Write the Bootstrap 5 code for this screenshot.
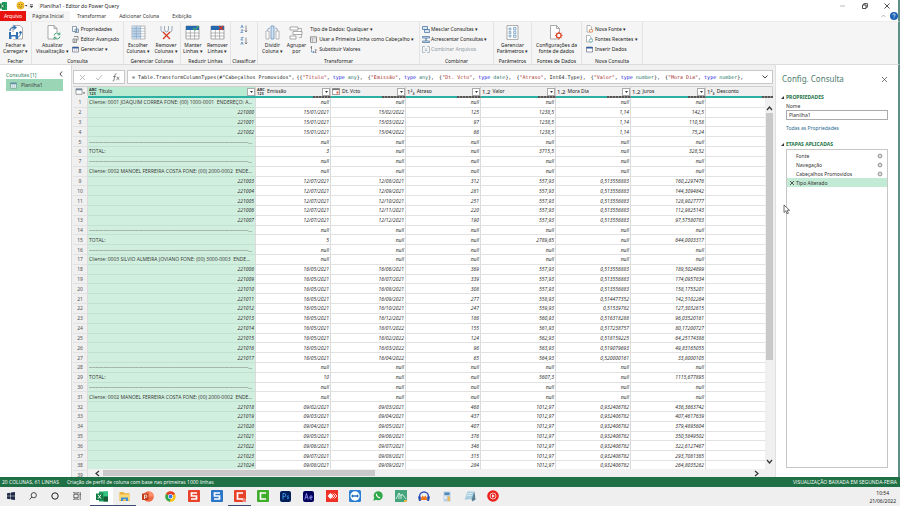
<!DOCTYPE html>
<html lang="pt-BR">
<head>
<meta charset="utf-8">
<meta name="viewport" content="width=device-width, initial-scale=1">
<title>Planilha1 - Editor do Power Query</title>
<link href="https://cdn.jsdelivr.net/npm/bootstrap@5.3.0/dist/css/bootstrap.min.css" rel="stylesheet">
<style>
body{font-family:"Noto Sans","Open Sans",sans-serif;font-size:5px;line-height:8px;color:#333;background:#fff}
button,input,a.plain{font:inherit;color:inherit;text-decoration:none}
a.plain{color:#2f6a8f}
button{background:none;border:0;padding:0}
svg{display:block;flex:none}
.fill{min-height:0}
.edge{border-right:2px solid #5f8f86}
.titlebar{height:11px;color:#222}
.tabs{height:10px}
.tabs button{height:10px;white-space:nowrap}
.tab-file{background:#e8130f;color:#fff;width:26px}
.tab-on{background:#f5f5f5;width:44px}
.tab-off{margin-left:7px;margin-right:6px}
.ribbon{height:44px;background:#f5f5f5;border-bottom:1px solid #dcdcdc;border-top:1px solid #ececec;line-height:6px;color:#222}
.grp{border-right:1px solid #e3e3e3;padding-top:3px;flex:none;white-space:nowrap}
.grp-body{height:32px}
.grp-name{text-align:center;line-height:8px}
.big{display:flex;flex-direction:column;align-items:center;text-align:center;gap:2px;line-height:6px}
.rows3{display:flex;flex-direction:column;gap:2px}
.rows3 button{display:flex;align-items:center;gap:2px;height:8px}
.near{padding-left:2px}.near button{gap:1px}
.w32{width:32px}.w92{width:92px}.w57{width:57px}.w50{width:50px}.w27{width:27px}.w162{width:162px}.w74{width:74px}.w38{width:38px}.w61{width:61px}
.queries{width:72px;border-right:1px solid #d9d9d9;padding:6px 8px 0 6px;color:#2f7d57}
.query-on{background:#9ad5b5;height:12px;color:#444;width:100%}
.center-pane{min-width:0;background:#f0f0f0;padding:5px 2px 0 1px}
.fbar{height:14px;gap:2px;margin-bottom:2px}
.fbox{background:#fff;border:1px solid #c8c8c8}
.ftools{width:52px}
.formula{font-family:"DejaVu Sans Mono","Liberation Mono",monospace;color:#222;white-space:pre;overflow:hidden;min-width:0;padding-left:4px}
.formula span{margin-right:2px}
.formula b{font-weight:400;color:#a8322e}.formula i{font-style:normal;color:#2222d8}.formula u{text-decoration:none;color:#28786c}
.gridview{overflow:hidden;min-height:0;background:#fff}
.sheet{table-layout:fixed;width:100%;border-collapse:separate;border-spacing:0}
.c-num{width:15px}.c-tit{width:168px}.c-val{width:75px}
.heads th{height:10px;padding:0;background:#f0f0f0;font-weight:400;border-right:1px solid #d0d0d0;border-top:1px solid #d0d0d0;line-height:9px;color:#222}
.heads th.sel{background:#b9ead2}
.hcell{display:flex;align-items:center;height:9px;gap:2px;padding:0 0 0 1px}
.abc{font-size:4px;line-height:4px;width:8px;text-align:left;font-weight:600}
.n12{font-size:6px;line-height:8px}
.drop{margin-left:auto;width:8px;height:8px;border:1px solid #ababab !important;background:#fff !important;display:flex;align-items:center;justify-content:center}
.quality td{height:2px;padding:0;line-height:0;background:#2bb0a3}
.quality td:first-child{background:#f0f0f0}
.quality span{display:block;height:2px;margin-left:auto;background:repeating-linear-gradient(90deg,#555 0 2px,#8a8a8a 2px 3px)}
.q18{width:18px}.q24{width:24px}.q11{width:11px}
.bodywrap{position:relative;overflow:hidden;min-height:0}
.datarows{height:calc(100% + 4px)}
.datarows td,.datarows th{padding:0 1px 0 0;line-height:8px;border-bottom:1px solid #e2e2e2;border-right:1px solid #dcdcdc;text-align:right;font-style:italic;white-space:nowrap;overflow:hidden;text-overflow:ellipsis;color:#333;font-weight:400}
.datarows th{background:#f0f0f0;font-style:normal;text-align:center;color:#555;padding:0}
.datarows td.tit{background:#d1efdf;border-bottom-color:#c3e1d1}
.datarows td.txt{font-family:"Open Sans","Noto Sans",sans-serif;text-align:left;font-style:normal;padding:0 2px 0 1px;white-space:pre}
.vscroll{position:absolute;right:0;top:0;bottom:8px;width:8px;background:#f0f0f0;padding:8px 0 5px}
.vthumb{flex:0 0 69%;background:#c9c9c9;width:7px;margin-top:2px}
.hscroll{position:absolute;left:15px;right:0;bottom:0;height:8px;background:#f0f0f0;padding-left:7px;padding-right:14px}
.hthumb{width:41%;height:6px;background:#c9c9c9;margin-left:3px}
.settings{width:123px;padding:8px 10px 9px 4px;border-left:1px solid #e0e0e0}
.settings h1{font-size:8px;line-height:12px;color:#4e7d6d;margin:0;padding-left:2px;font-weight:400}
.settings h2{font-size:5px;line-height:8px;color:#217346;margin:0;font-weight:700}
.sect{padding-left:6px}
.gap-label{margin-top:1px}
.namebox{border:1px solid #ababab;height:10px;width:100%;padding:0 2px;border-radius:0;background:#fff}
.steps{border:1px solid #c6c6c6;padding-top:1px}
.step{display:flex;align-items:center;height:9px;width:100%;padding:0 4px 0 2px}
.step span{flex:1;text-align:left}
.step-on{background:#c2ead5 !important}
.status{font-family:"Open Sans","Noto Sans",sans-serif;height:10px;background:#1f7145;color:#fff;padding:0 3px 0 2px;line-height:10px}
.taskbar{height:19px;background:#efefef;color:#222}
.tb{width:23px;height:19px;display:flex;align-items:center;justify-content:center;border-bottom:1px solid transparent !important}
.tb-s{width:22px}
.tb-s + .tb:not(.tb-s){margin-left:2px}
.run{border-bottom-color:#3a4a70 !important}
.front{background:#fff !important}
.pointer{position:absolute;left:7px;top:139px}
</style>
<script src="https://cdn.jsdelivr.net/npm/bootstrap@5.3.0/dist/js/bootstrap.bundle.min.js"></script>
</head>
<body>
<div class="vh-100 d-flex flex-column overflow-hidden">
<div class="d-flex flex-column flex-grow-1 overflow-hidden fill">
<header class="titlebar edge d-flex align-items-center">
  <svg width="8" height="8" viewBox="0 0 8 8"><path d="M2 0h5v8H2z" fill="#21a366"/><path d="M0 1.500h5v5H0z" fill="#107c41"/><path d="M1.300 2.500l2.400 3M3.700 2.500l-2.400 3" stroke="#fff" stroke-width=".8"/></svg>
  <svg class="ms-2" width="9" height="9" viewBox="0 0 9 9"><circle cx="4.500" cy="4.500" r="3.700" fill="#f7c62f" stroke="#d59a1b" stroke-width=".5"/><circle cx="3.200" cy="3.500" r=".6" fill="#5b4310"/><circle cx="5.800" cy="3.500" r=".6" fill="#5b4310"/><path d="M2.500 5.300q2 2 4 0" stroke="#5b4310" stroke-width=".6" fill="none"/></svg>
  <svg width="15" height="6" viewBox="0 0 15 6"><path d="M0 2h2.500L1.200 3.700z" fill="#444"/><path d="M4 0v6M14 0v6" stroke="#ccc" stroke-width=".6"/><path d="M5 1.500h3M5 3h3l-1.500 1.800z" stroke="#444" stroke-width=".6" fill="#444"/></svg>
  <span>Planilha1 - Editor do Power Query</span>
  <div class="ms-auto d-flex align-items-center gap-3 me-2">
    <button aria-label="Minimizar"><svg width="6" height="6"><path d="M0 3h5" stroke="#bbb"/></svg></button>
    <button aria-label="Restaurar"><svg width="6" height="6" viewBox="0 0 6 6"><path d="M.5 2h3.500v3.500H.5zM1.800 2V.6h3.600v3.600H4" fill="none" stroke="#222" stroke-width=".8"/></svg></button>
    <button aria-label="Fechar janela"><svg width="6" height="6" viewBox="0 0 6 6"><path d="M.5.500l5 5M5.500.500l-5 5" stroke="#222" stroke-width=".8"/></svg></button>
  </div>
</header>
<nav class="tabs edge d-flex align-items-center">
  <button class="tab-file">Arquivo</button><button class="tab-on">Página Inicial</button><button class="tab-off">Transformar</button><button class="tab-off">Adicionar Coluna</button><button class="tab-off">Exibição</button>
  <div class="ms-auto d-flex align-items-center gap-1"><svg width="5" height="4"><path d="M.5 3L2.500 1l2 2" stroke="#999" stroke-width=".7" fill="none"/></svg><button aria-label="Ajuda"><svg width="8" height="8"><circle cx="4" cy="4" r="4" fill="#1e62b5"/><path d="M2.800 3.200q0-1.400 1.200-1.400t1.200 1.100q0 .7-1.200 1.500v.5M4 5.600v.7" stroke="#fff" stroke-width=".7" fill="none"/></svg></button></div>
</nav>
<section class="ribbon edge d-flex">
  <div class="grp w32"><div class="grp-body d-flex justify-content-center"><button class="big"><svg width="16" height="15" viewBox="0 0 16 15"><path d="M5 .5h7l2.500 2.500v11H5z" fill="#fff" stroke="#888" stroke-width=".7"/><path d="M1 7h9v7H1z" fill="#3572b0"/><path d="M3 7h5v3H3zM3.500 11.500h4V14h-4z" fill="#fff"/><path d="M2 6Q2 2 7 2.500M5.500.800L8 2.600 5.500 4.400" fill="none" stroke="#3572b0" stroke-width="1.200"/><path d="M9 12q4 0 3.500-5M11 8.500L12.500 6 14 8.500" fill="none" stroke="#3572b0"/></svg><span>Fechar e<br>Carregar ▾</span></button></div><div class="grp-name">Fechar</div></div>
  <div class="grp w92"><div class="grp-body d-flex justify-content-between px-1"><button class="big"><svg class="ms-1" width="14" height="15" viewBox="0 0 14 15"><path d="M1 .5h6l3 3V14H1zM7 .5v3h3" fill="#fff" stroke="#888" stroke-width=".7"/><circle cx="10" cy="11" r="3.500" fill="#fff"/><path d="M7 10.500a3 3 0 0 1 5.500-1M13 11.500a3 3 0 0 1-5.500 1M12.800 7.500v2.300h-2.200M7.200 14.500v-2.300h2.200" fill="none" stroke="#35956b" stroke-width=".9"/></svg><span>Atualizar<br>Visualização ▾</span></button>
    <div class="rows3"><button><svg width="7" height="7" viewBox="0 0 7 7"><path d="M.5.500h4v5h-4zM3 3h3.500v3.500H3z" fill="#fff" stroke="#5d7894" stroke-width=".7"/><path d="M4 4.200h1.700M4 5.300h1.700" stroke="#3572b0" stroke-width=".5"/></svg>Propriedades</button><button><svg width="7" height="7" viewBox="0 0 7 7"><path d="M2 .5h4v4M1 3h3.500v3.500H1z" fill="none" stroke="#666" stroke-width=".7"/><path d="M2 4.200h1.500M2 5.300h1.500" stroke="#444" stroke-width=".5"/></svg>Editor Avançado</button><button><svg width="7" height="7" viewBox="0 0 7 7"><path d="M.5 1h6v5h-6z" fill="#fff" stroke="#557" stroke-width=".6"/><path d="M.5 1h6v1.500h-6z" fill="#2f5fa0"/><path d="M.5 4h6M2.500 2v4M4.500 2v4" stroke="#99a" stroke-width=".3"/></svg>Gerenciar ▾</button></div></div><div class="grp-name">Consulta</div></div>
  <div class="grp w57"><div class="grp-body d-flex justify-content-around"><button class="big"><svg width="15" height="15" viewBox="0 0 15 15"><path d="M1 1h13v13H1z" fill="#fff" stroke="#888" stroke-width=".6"/><path d="M1 1h8.600v13H1z" fill="#bcd5ec"/><path d="M1 3.600h13M1 6.200h13M1 8.800h13M1 11.400h13M5.300 1v13M9.600 1v13" stroke="#7f98b0" stroke-width=".5"/></svg><span>Escolher<br>Colunas ▾</span></button><button class="big"><svg width="15" height="15" viewBox="0 0 15 15"><path d="M2 1v4q0 2 2 2M5.500 1v3q0 3 2 3t2-3V1M13 1v4q0 2-2 2" fill="none" stroke="#8ea3b8" stroke-width=".9"/><path d="M4 7l7 7M11 7l-7 7" stroke="#d23b22" stroke-width="1.300"/></svg><span>Remover<br>Colunas ▾</span></button></div><div class="grp-name">Gerenciar Colunas</div></div>
  <div class="grp w50"><div class="grp-body d-flex justify-content-around"><button class="big"><svg width="15" height="15" viewBox="0 0 15 15"><path d="M1 1h13v13H1z" fill="#fff" stroke="#888" stroke-width=".7"/><path d="M1 1h13v4H1z" fill="#2468b0"/><path d="M1 8h13M1 11h13M5.300 5v9M9.600 5v9" stroke="#888" stroke-width=".6"/><path d="M8 3l2 2 3.500-4" stroke="#4aa372" stroke-width="1.200" fill="none"/></svg><span>Manter<br>Linhas ▾</span></button><button class="big"><svg width="15" height="15" viewBox="0 0 15 15"><path d="M1 1h13v13H1z" fill="#fff" stroke="#888" stroke-width=".7"/><path d="M1 1h13v4H1z" fill="#2468b0"/><path d="M1 8h13M1 11h13M5.300 5v9M9.600 5v9" stroke="#888" stroke-width=".6"/><path d="M9 1l4 4M13 1L9 5" stroke="#d23b22" stroke-width="1.200"/></svg><span>Remover<br>Linhas ▾</span></button></div><div class="grp-name">Reduzir Linhas</div></div>
  <div class="grp w27"><div class="grp-body d-flex flex-column align-items-center gap-1"><button aria-label="Classificar crescente"><svg width="8" height="8" viewBox="0 0 8 8"><path d="M.8 3L2 .3 3.200 3M.8 5h2.400L.8 7.700h2.400" fill="none" stroke="#3572b0" stroke-width=".7"/><path d="M6 .5v6.500M4.800 5.500L6 7l1.200-1.500" fill="none" stroke="#666" stroke-width=".7"/></svg></button><button aria-label="Classificar decrescente"><svg width="8" height="8" viewBox="0 0 8 8"><path d="M.8.300h2.400L.8 3h2.400M.8 7.700L2 5l1.200 2.700" fill="none" stroke="#3572b0" stroke-width=".7"/><path d="M6 .5v6.500M4.800 5.500L6 7l1.200-1.500" fill="none" stroke="#666" stroke-width=".7"/></svg></button></div><div class="grp-name">Classificar</div></div>
  <div class="grp w162"><div class="grp-body d-flex ps-1 gap-1"><button class="big"><svg width="15" height="15" viewBox="0 0 15 15"><path d="M1 6h3v8H1zM11 6h3v8h-3z" fill="#fff" stroke="#999" stroke-width=".7"/><path d="M6 1h3v13H6z" fill="#cfe1f3" stroke="#5d89b5" stroke-width=".7"/><path d="M5 3Q2.500 3 2.500 5.500M10 3q2.500 0 2.500 2.500" fill="none" stroke="#5d89b5" stroke-width=".7"/></svg><span>Dividir<br>Coluna ▾</span></button><button class="big"><svg width="15" height="15" viewBox="0 0 15 15"><path d="M1 2h8v3H1zM4 6.500h9v3H4zM1 11h6v3H1z" fill="#fff" stroke="#888" stroke-width=".7"/><path d="M9 3.500h3.500v3M10 12.500h2.500v-3" fill="none" stroke="#888" stroke-width=".6"/></svg><span>Agrupar<br>por</span></button>
    <div class="rows3"><button>Tipo de Dados: Qualquer ▾</button><button><svg width="7" height="7" viewBox="0 0 7 7"><path d="M.5.800h6v5.500h-6z" fill="#fff" stroke="#666" stroke-width=".7"/><path d="M.5 2.200h6M.5 4h6M2.500 2v4" stroke="#888" stroke-width=".5"/></svg>Usar a Primeira Linha como Cabeçalho ▾</button><button><svg width="7" height="7" viewBox="0 0 7 7"><path d="M.5 1.200L1.500.500v3" fill="none" stroke="#444" stroke-width=".7"/><path d="M1.500 4v2H4M3.200 5L4 6 3.200 7" fill="none" stroke="#3572b0" stroke-width=".6"/><path d="M4.800 3.800h1.500L4.800 6.500h1.700" fill="none" stroke="#444" stroke-width=".6"/></svg>Substituir Valores</button></div></div><div class="grp-name">Transformar</div></div>
  <div class="grp w74"><div class="grp-body"><div class="rows3 near"><button><svg width="8" height="7" viewBox="0 0 8 7"><path d="M.5.500h5v3h-5zM2.500 3.500h5v3h-5z" fill="#d6e6f5" stroke="#426d98" stroke-width=".7"/></svg>Mesclar Consultas ▾</button><button><svg width="8" height="7" viewBox="0 0 8 7"><path d="M.5.500h7v1.500h-7zM.5 5h7v1.500h-7z" fill="#d6e6f5" stroke="#426d98" stroke-width=".7"/><path d="M4 2v3" stroke="#426d98"/></svg>Acrescentar Consultas ▾</button><button class="text-secondary opacity-75"><svg width="8" height="7" viewBox="0 0 8 7"><path d="M3 .5H.5v6H3M5 .5h2.500v6H5M4 2v3M2.800 4L4 5.200 5.200 4" fill="none" stroke="#7790a8" stroke-width=".7"/></svg>Combinar Arquivos</button></div></div><div class="grp-name">Combinar</div></div>
  <div class="grp w38"><div class="grp-body d-flex justify-content-center"><button class="big"><svg width="13" height="15" viewBox="0 0 13 15"><path d="M1 .6h11v13.800H1z" fill="#fff" stroke="#888" stroke-width=".7"/><path d="M3 3h2v2H3zM3 6.500h2v2H3zM3 10h2v2H3zM7.500 2.500H10V5H7.500zM7.500 6.300H10v2.500H7.500zM7.500 10H10v2.400H7.500z" fill="#dbe9f5" stroke="#6390b8" stroke-width=".6"/></svg><span>Gerenciar<br>Parâmetros ▾</span></button></div><div class="grp-name">Parâmetros</div></div>
  <div class="grp w50"><div class="grp-body d-flex justify-content-center"><button class="big"><svg width="14" height="15" viewBox="0 0 14 15"><path d="M1.500 .5h6l3 3V14h-9zM7.500.500v3h3" fill="#fff" stroke="#888" stroke-width=".7"/><circle cx="9.800" cy="10.500" r="2.300" fill="#fff" stroke="#dd4b2b" stroke-width="1.300"/><path d="M9.800 6.700v1.500M9.800 12.800v1.500M6 10.500h1.500M12.100 10.500h1.500M7.100 7.800l1 1M11.500 12.200l1 1M12.500 7.800l-1 1M8.100 12.200l-1 1" stroke="#dd4b2b"/></svg><span>Configurações da<br>fonte de dados</span></button></div><div class="grp-name">Fontes de Dados</div></div>
  <div class="grp w61"><div class="grp-body ps-1"><div class="rows3"><button><svg width="7" height="8" viewBox="0 0 7 8"><path d="M1 .5h3l1.500 1.500v5H1z" fill="#fff" stroke="#888" stroke-width=".6"/><path d="M3.500 4.500H6.500V7h-3z" fill="#fff" stroke="#d87c3b" stroke-width=".7"/></svg>Nova Fonte ▾</button><button><svg width="7" height="8" viewBox="0 0 7 8"><path d="M.5.500h3L5 2v5H.5z" fill="#fff" stroke="#888" stroke-width=".6"/><circle cx="5" cy="5.500" r="1.700" fill="#fff" stroke="#3b8f91" stroke-width=".7"/></svg>Fontes Recentes ▾</button><button><svg width="7" height="7" viewBox="0 0 7 7"><path d="M.5 1h6v5h-6z" fill="#fff" stroke="#557" stroke-width=".6"/><path d="M.5 1h6v1.500h-6z" fill="#2f5fa0"/></svg>Inserir Dados</button></div></div><div class="grp-name">Nova Consulta</div></div>
</section>
<main class="edge d-flex flex-grow-1 fill">
  <aside class="queries flex-shrink-0"><div class="d-flex justify-content-between align-items-start"><span>Consultas [1]</span><button aria-label="Recolher"><svg width="4" height="6"><path d="M3 .5L1 3l2 2.500" stroke="#333" stroke-width=".9" fill="none"/></svg></button></div>
    <button class="query-on d-flex align-items-center gap-1 ps-1"><svg width="7" height="7" viewBox="0 0 7 7"><path d="M.5.800h6v5.500h-6z" fill="#e9f5ee" stroke="#5a8f86" stroke-width=".6"/><path d="M.5.800h6v1.500h-6z" fill="#5a8fa6"/><path d="M.5 4.200h6M2.500 2v4M4.500 2v4" stroke="#8ab" stroke-width=".3"/></svg>Planilha1</button></aside>
  <section class="center-pane flex-grow-1 d-flex flex-column">
    <div class="fbar d-flex">
      <div class="fbox ftools d-flex align-items-center justify-content-around flex-shrink-0"><button aria-label="Cancelar"><svg width="7" height="7"><path d="M1 1l5 5M6 1L1 6" stroke="#aaa" stroke-width=".8"/></svg></button><button aria-label="Confirmar"><svg width="8" height="7"><path d="M1 4l2 2 4-5" stroke="#aaa" stroke-width=".8" fill="none"/></svg></button><button aria-label="Inserir etapa"><svg width="8" height="9" viewBox="0 0 8 9"><path d="M4.500.800Q3 .3 2.600 3L2 7Q1.800 8.500.6 8M1.200 3.500h2.600M4.600 4.200q.8-.6 1.200.8t1.600 1.800M7.400 4.200L4.300 7" stroke="#555" stroke-width=".7" fill="none"/></svg></button></div>
      <div class="fbox d-flex align-items-center flex-grow-1 overflow-hidden"><div class="formula flex-grow-1" role="textbox" aria-label="Fórmula"><span>= Table.TransformColumnTypes(#"Cabeçalhos Promovidos",</span><span>{{<b>"Título"</b>, <i>type</i> <u>any</u>}, </span><span>{<b>"Emissão"</b>, <i>type</i> <u>any</u>}, </span><span>{<b>"Dt. Vcto"</b>, <i>type</i> <u>date</u>}, </span><span>{<b>"Atraso"</b>, Int64.Type}, </span><span>{<b>"Valor"</b>, <i>type</i> <u>number</u>}, </span><span>{<b>"Mora Dia"</b>, <i>type</i> <u>number</u>},</span></div><button class="px-1" aria-label="Expandir"><svg width="6" height="4"><path d="M.5.500l2.500 2.500L5.500.500" stroke="#333" stroke-width=".9" fill="none"/></svg></button></div>
    </div>
    <div class="gridview flex-grow-1 d-flex flex-column">
      <table class="sheet flex-shrink-0"><colgroup><col class="c-num"><col class="c-tit"><col class="c-val" span="6"><col></colgroup>
        <thead class="heads"><tr id="heads"><th><div class="hcell"><svg width="11" height="7" viewBox="0 0 11 7"><path d="M2 .8h6v5.500H2z" fill="#fff" stroke="#666" stroke-width=".6"/><path d="M2 .8h6v1.500H2z" fill="#6d87a0"/><path d="M9 4.500h2L10 6z" fill="#333"/></svg></div></th></tr></thead>
        <tbody class="quality"><tr><td></td><td></td><td><span class="q18"></span></td><td><span class="q24"></span></td><td><span class="q24"></span></td><td><span class="q18"></span></td><td><span class="q24"></span></td><td><span class="q18"></span></td><td><span class="q11"></span></td></tr></tbody></table>
      <div class="bodywrap flex-grow-1">
        <table class="sheet datarows"><colgroup><col class="c-num"><col class="c-tit"><col class="c-val" span="6"><col></colgroup><tbody id="rows"></tbody></table>
        <div class="vscroll d-flex flex-column align-items-center"><svg width="7" height="5"><path d="M1 4l2.500-3L6 4" stroke="#333" stroke-width="1.200" fill="none"/></svg><div class="vthumb"></div><svg class="mt-auto" width="7" height="5"><path d="M1 1l2.500 3L6 1" stroke="#333" stroke-width="1.200" fill="none"/></svg></div>
        <div class="hscroll d-flex align-items-center"><svg width="5" height="7"><path d="M4 1L1 3.500 4 6" stroke="#333" stroke-width="1.200" fill="none"/></svg><div class="hthumb"></div><svg class="ms-auto" width="5" height="7"><path d="M1 1l3 2.500L1 6" stroke="#333" stroke-width="1.200" fill="none"/></svg></div>
      </div>
    </div>
  </section>
  <aside class="settings flex-shrink-0 d-flex flex-column position-relative">
    <div class="d-flex justify-content-between align-items-center mb-1"><h1>Config. Consulta</h1><button aria-label="Fechar painel"><svg width="7" height="7"><path d="M1 1l5 5M6 1L1 6" stroke="#555" stroke-width=".8"/></svg></button></div>
    <div class="d-flex align-items-center mt-1"><svg width="6" height="5"><path d="M4 1v3H1z" fill="#333"/></svg><h2>PROPRIEDADES</h2></div>
    <div class="sect"><label for="qname" class="d-block gap-label">Nome</label><input id="qname" class="namebox d-block" value="Planilha1"><a class="plain d-block mt-1" href="#">Todas as Propriedades</a></div>
    <div class="d-flex align-items-center mt-2"><svg width="6" height="5"><path d="M4 1v3H1z" fill="#333"/></svg><h2>ETAPAS APLICADAS</h2></div>
    <div class="sect flex-grow-1 d-flex flex-column gap-label"><div class="steps flex-grow-1" id="steps"></div></div>
    <svg class="pointer" width="8" height="11" viewBox="0 0 8 11"><path d="M1 1v7.500l1.800-1.700 1.300 3 1.300-.6-1.300-2.900h2.500z" fill="#fff" stroke="#333" stroke-width=".7"/></svg>
  </aside>
</main>
<footer class="status d-flex justify-content-between"><div class="d-flex gap-2"><span>20 COLUNAS, 61 LINHAS</span><span>Criação de perfil de coluna com base nas primeiras 1000 linhas</span></div><span>VISUALIZAÇÃO BAIXADA EM SEGUNDA-FEIRA</span></footer>
</div>
<div class="taskbar d-flex align-items-center flex-shrink-0">
  <button class="tb tb-s" aria-label="Iniciar"><svg width="8" height="8"><path d="M0 1.200l3.500-.5v3H0zM4 .6L8 0v3.700H4zM0 4.200h3.500v3L0 6.800zM4 4.200h4V8l-4-.6z" fill="#1d2b45"/></svg></button>
  <button class="tb tb-s" aria-label="Pesquisar"><svg width="8" height="8"><circle cx="4.800" cy="3.200" r="2.600" fill="none" stroke="#222" stroke-width=".8"/><path d="M3 5L.5 7.500" stroke="#222" stroke-width=".8"/></svg></button>
  <button class="tb tb-s" aria-label="Cortana"><svg width="8" height="8"><circle cx="4" cy="4" r="3.200" fill="none" stroke="#222"/></svg></button>
  <button class="tb tb-s" aria-label="Visão de tarefas"><svg width="8" height="8"><path d="M.8 2.300h4.400v3.400H.8zM.8 0v1h4.400V0M.8 8V7h4.400v1M7.200 0v8M6.500 2.500h1.400" fill="none" stroke="#333" stroke-width=".7"/></svg></button>
  <button class="tb run front" aria-label="Excel"><svg width="12" height="11"><path d="M3 .5h9v10H3z" fill="#21a366"/><path d="M7.500.500H12v5H7.500z" fill="#33c481"/><path d="M7.500 5.500H12v5H7.500z" fill="#185c37"/><path d="M0 2.500h7v6.500H0z" fill="#107c41"/><path d="M2 3.700l3 4M5 3.700l-3 4" stroke="#fff"/></svg></button>
  <button class="tb run" aria-label="Explorador de Arquivos"><svg width="11" height="11"><path d="M.5 1h4l1 1.200h5V10H.5z" fill="#eab23f"/><path d="M.5 3.500h10V9H.5z" fill="#fbd873"/><path d="M2 10V6.500h7V10H7V8.200H4V10z" fill="#3b8fd6"/></svg></button>
  <button class="tb" aria-label="PowerPoint"><svg width="12" height="11"><circle cx="6.500" cy="5.500" r="5.300" fill="#ed6c47"/><path d="M6.500.200a5.300 5.300 0 0 1 5.300 5.300H6.500z" fill="#ff8f6b"/><path d="M0 2.500h6.500V9H0z" fill="#c43e1c"/><path d="M2.500 8V4h1.200q1.200 0 1.200 1.200T3.700 6.400H2.500" stroke="#fff" stroke-width=".8" fill="none"/></svg></button>
  <button class="tb" aria-label="Chrome"><svg width="11" height="11" viewBox="0 0 11 11"><circle cx="5.500" cy="5.500" r="5.200" fill="#fbc116"/><path d="M5.500 5.500L1 2.900A5.200 5.200 0 0 1 10 2.900z" fill="#e33b2e"/><path d="M5.500 5.500L1 2.900a5.200 5.200 0 0 0 4 7.800z" fill="#2da94f"/><circle cx="5.500" cy="5.500" r="2.500" fill="#fff"/><circle cx="5.500" cy="5.500" r="1.900" fill="#3b78e7"/></svg></button>
  <button class="tb" aria-label="Snagit"><svg width="12" height="12"><rect width="12" height="12" rx="1" fill="#e9422b"/><path d="M9 3H3.500v3h5v3H3" stroke="#fff" stroke-width="1.700" fill="none"/></svg></button>
  <button class="tb" aria-label="Snagit Editor"><svg width="12" height="12"><rect width="12" height="12" rx="1" fill="#2c76c8"/><path d="M9 3H3.500v3h5v3H3" stroke="#fff" stroke-width="1.700" fill="none"/></svg></button>
  <button class="tb run" aria-label="Gravador"><svg width="12" height="12"><rect width="12" height="12" rx="1" fill="#e9422b"/><path d="M9 3H3.500v6H9" stroke="#fff" stroke-width="1.700" fill="none"/><circle cx="10" cy="10" r="1.500" fill="#fff"/><circle cx="10" cy="10" r=".9" fill="#e9422b"/></svg></button>
  <button class="tb" aria-label="Camtasia"><svg width="12" height="12"><rect width="12" height="12" rx="1" fill="#3fae2a"/><path d="M9 3H3.500v6H9" stroke="#fff" stroke-width="1.700" fill="none"/></svg></button>
  <button class="tb" aria-label="Photoshop"><svg width="11" height="11"><rect width="11" height="11" rx="2" fill="#001e5a"/><path d="M3 8.500v-6h1.300q1.500 0 1.500 1.600T4.300 5.700H3M8.800 5q-1.600-.6-1.600.4t1.300 1.200-1.500 1.300" stroke="#4aa9ff" stroke-width=".8" fill="none"/></svg></button>
  <button class="tb" aria-label="After Effects"><svg width="11" height="11"><rect width="11" height="11" rx="2" fill="#00005b"/><path d="M1.800 8.500l1.700-6 1.700 6M2.500 6.300h2M6.800 6.500h2.400q0-1.800-1.200-1.800T6.800 6.500t1.200 1.800l1-.3" stroke="#9fa0ff" stroke-width=".8" fill="none"/></svg></button>
  <button class="tb" aria-label="AnyDesk"><svg width="12" height="12"><rect width="12" height="12" fill="#ef3225"/><path d="M1.500 6L4.500 3l3 3-3 3z" fill="#fff"/><path d="M6.500 3.500L9 6 6.500 8.500M8.500 3.500L11 6 8.500 8.500" stroke="#fff" stroke-width=".8" fill="none"/></svg></button>
  <button class="tb" aria-label="TeamViewer"><svg width="12" height="12"><rect width="12" height="12" rx="1.500" fill="#2a7fd4"/><circle cx="6" cy="6" r="4.700" fill="#fff"/><path d="M2 6l2-1.800v1.100h4V4.200L10 6 8 7.800V6.700H4v1.100z" fill="#1f6dc0"/></svg></button>
  <button class="tb" aria-label="WhatsApp"><svg width="10" height="10"><circle cx="5.200" cy="4.800" r="4.500" fill="#2fa84a"/><path d="M.3 9.700l1-3.200 2.200 2.200z" fill="#2fa84a"/><path d="M3.500 2.800q-.5 1.500 1 2.800t2.600 1" stroke="#fff" stroke-width="1.200" fill="none"/></svg></button>
  <button class="tb" aria-label="Topografia"><svg width="12" height="12"><rect width="12" height="12" fill="#45a57c"/><path d="M1 9L4 3l2 3 1-2 4 5M4 3v6M6 6v3" stroke="#d8f3e5" stroke-width=".9" fill="none"/><path d="M9 10h3v2H9z" fill="#e9b84c"/></svg></button>
  <button class="tb" aria-label="Audacity"><svg width="12" height="11"><path d="M1.500 7.500V5.500a4.500 4.500 0 0 1 9 0v2" stroke="#2b4fb5" stroke-width="1.400" fill="none"/><path d="M0 5.500h2.800V10H1zM9.200 5.500H12L11 10H9.200z" fill="#2b4fb5"/><path d="M3 7l1.500-2.500L6 6l1.500-1.500L9 7v2H3z" fill="#ee7620"/></svg></button>
  <button class="tb" aria-label="Calculadora"><svg width="10" height="11"><path d="M1.500.500h7v10h-7z" fill="#b9d1e6"/><path d="M2.500 1.500h5v2.500h-5z" fill="#4f86b8"/><path d="M2.500 5.500h2v2h-2z" fill="#fff"/><path d="M5.500 5.500h2.500V10H5.500z" fill="#efb95b"/></svg></button>
  <button class="tb" aria-label="Bloco de Notas"><svg width="12" height="11"><path d="M3.500.500h7L8.500 8l-8 .8z" fill="#a9cfe0"/><path d="M10.500.500l1 8-3 2-1-2z" fill="#5c8299"/><path d="M3.800 2.500h4.500M3 4.500h4.500" stroke="#e8f5fa" stroke-width=".7"/></svg></button>
  <button class="tb" aria-label="YouTube Music"><svg width="12" height="12"><circle cx="6" cy="6" r="5.800" fill="#e9221b"/><circle cx="6" cy="6" r="3" fill="none" stroke="#fff" stroke-width=".7"/><path d="M5 4.300v3.400L7.800 6z" fill="#fff"/></svg></button>
  <div class="ms-auto text-center pe-1"><div>10:54</div><div>21/06/2022</div></div>
</div>
</div>
<script>
const abc='<span class="abc">ABC<br>123</span>', int='<span class="n12">1²₃</span>', dec='<span class="n12">1.2</span>';
const cal='<svg width="8" height="7" viewBox="0 0 8 7"><path d="M.5.500h7v6h-7z" fill="#fff" stroke="#666" stroke-width=".6"/><path d="M.5.500h7v1.600h-7z" fill="#777"/><path d="M4.500 3.500h2v2h-2z" fill="#dd5b3b"/></svg>';
const heads=[[abc,'Título'],[abc,'Emissão'],[cal,'Dt. Vcto'],[int,'Atraso'],[dec,'Valor'],[dec,'Mora Dia'],[dec,'Juros'],[int,'Desconto']];
document.getElementById('heads').insertAdjacentHTML('beforeend',heads.map(([ic,t],i)=>
  `<th class="${i?'':'sel'}"><div class="hcell">${ic}<span>${t}</span>${i<7?`<button class="drop" aria-label="Filtrar ${t}"><svg width="3" height="2"><path d="M0 0h3L1.500 2z" fill="#333"/></svg></button>`:''}</div></th>`).join(''));
const line='-'.repeat(130), nul='||||||';
const client=(n,name,fone,end)=>`Cliente: ${n} ${name} FONE: (00) ${fone}  ${end}`+nul;
const src=[
client('0001','JOAQUIM CORREA','1000-0001','ENDEREÇO: AVENIDA CENTRAL'),
'221000|15/01/2021|15/02/2022|125|1238,5|1,14|142,5','221001|15/01/2021|15/03/2022|97|1238,5|1,14|110,58','221002|15/01/2021|15/04/2022|66|1238,5|1,14|75,24',
line+nul,'TOTAL:|3|||3715,5||328,52',line+nul,
client('0002','MANOEL FERREIRA COSTA','2000-0002','ENDEREÇO: RUA'),
'221003|12/07/2021|12/08/2021|312|557,93|0,513556883|160,2297476','221004|12/07/2021|12/09/2021|281|557,93|0,513556883|144,3094842','221005|12/07/2021|12/10/2021|251|557,93|0,513556883|128,9027777','221006|12/07/2021|12/11/2021|220|557,93|0,513556883|112,9825143','221007|12/07/2021|12/12/2021|190|557,93|0,513556883|97,57580783',
line+nul,'TOTAL:|5|||2789,65||644,0003317',line+nul,
client('0003','SILVIO ALMEIRA JOVIANO','3000-0003','ENDEREÇO: RUA'),
'221008|16/05/2021|16/06/2021|369|557,93|0,513556883|189,5024899','221009|16/05/2021|16/07/2021|339|557,93|0,513556883|174,0957834','221010|16/05/2021|16/08/2021|308|557,93|0,513556883|158,1755201','221011|16/05/2021|16/09/2021|277|558,93|0,514477352|142,5102264','221012|16/05/2021|16/10/2021|247|559,93|0,51539782|127,3032615','221013|16/05/2021|16/12/2021|186|560,93|0,516318288|96,03520161','221014|16/05/2021|16/01/2022|155|561,93|0,517238757|80,17200727','221015|16/05/2021|16/02/2022|124|562,93|0,518159225|64,25174388','221016|16/05/2021|16/03/2022|96|563,93|0,519079693|49,83165055','221017|16/05/2021|16/04/2022|65|564,93|0,520000161|33,8000105',
line+nul,'TOTAL:|10|||5607,3||1115,677895',line+nul,
client('0002','MANOEL FERREIRA COSTA','2000-0002','ENDEREÇO: RUA'),
'221018|09/02/2021|09/03/2021|468|1012,97|0,932406782|436,3663742','221019|09/03/2021|09/04/2021|437|1012,97|0,932406782|407,4617639','221020|09/04/2021|09/05/2021|407|1012,97|0,932406782|379,4895604','221021|09/05/2021|09/06/2021|376|1012,97|0,932406782|350,5849502','221022|09/06/2021|09/07/2021|346|1012,97|0,932406782|322,6127467','221023|09/07/2021|09/08/2021|315|1012,97|0,932406782|293,7081365','221024|09/08/2021|09/09/2021|284|1012,97|0,932406782|264,8035262',
' '+nul];
document.getElementById('rows').innerHTML=src.map((r,i)=>{const c=r.split('|');
  return `<tr><th scope="row">${i+1}</th>`+c.map((v,j)=>j===0?`<td class="tit${/^22/.test(v)?'':' txt'}">${v}</td>`:`<td>${v||'null'}</td>`).join('')+'<td></td></tr>'}).join('');
const gear='<svg width="6" height="6" viewBox="0 0 6 6"><circle cx="3" cy="3" r="1.500" fill="none" stroke="#777" stroke-width=".7"/><path d="M3 .3v1M3 4.700v1M.3 3h1M4.700 3h1M1 1l.8.800M4.200 4.200l.8.800M5 1l-.8.800M1.800 4.200L1 5" stroke="#777" stroke-width=".6"/></svg>';
document.getElementById('steps').innerHTML=['Fonte','Navegação','Cabeçalhos Promovidos','Tipo Alterado'].map((s,i)=>
  `<button class="step${i===3?' step-on':''}"><svg width="7" height="6" viewBox="0 0 7 6">${i===3?'<path d="M1 1l4 4M5 1L1 5" stroke="#333" stroke-width=".8"/>':''}</svg><span>${s}</span>${i<3?gear:''}</button>`).join('');
</script>
</body>
</html>
